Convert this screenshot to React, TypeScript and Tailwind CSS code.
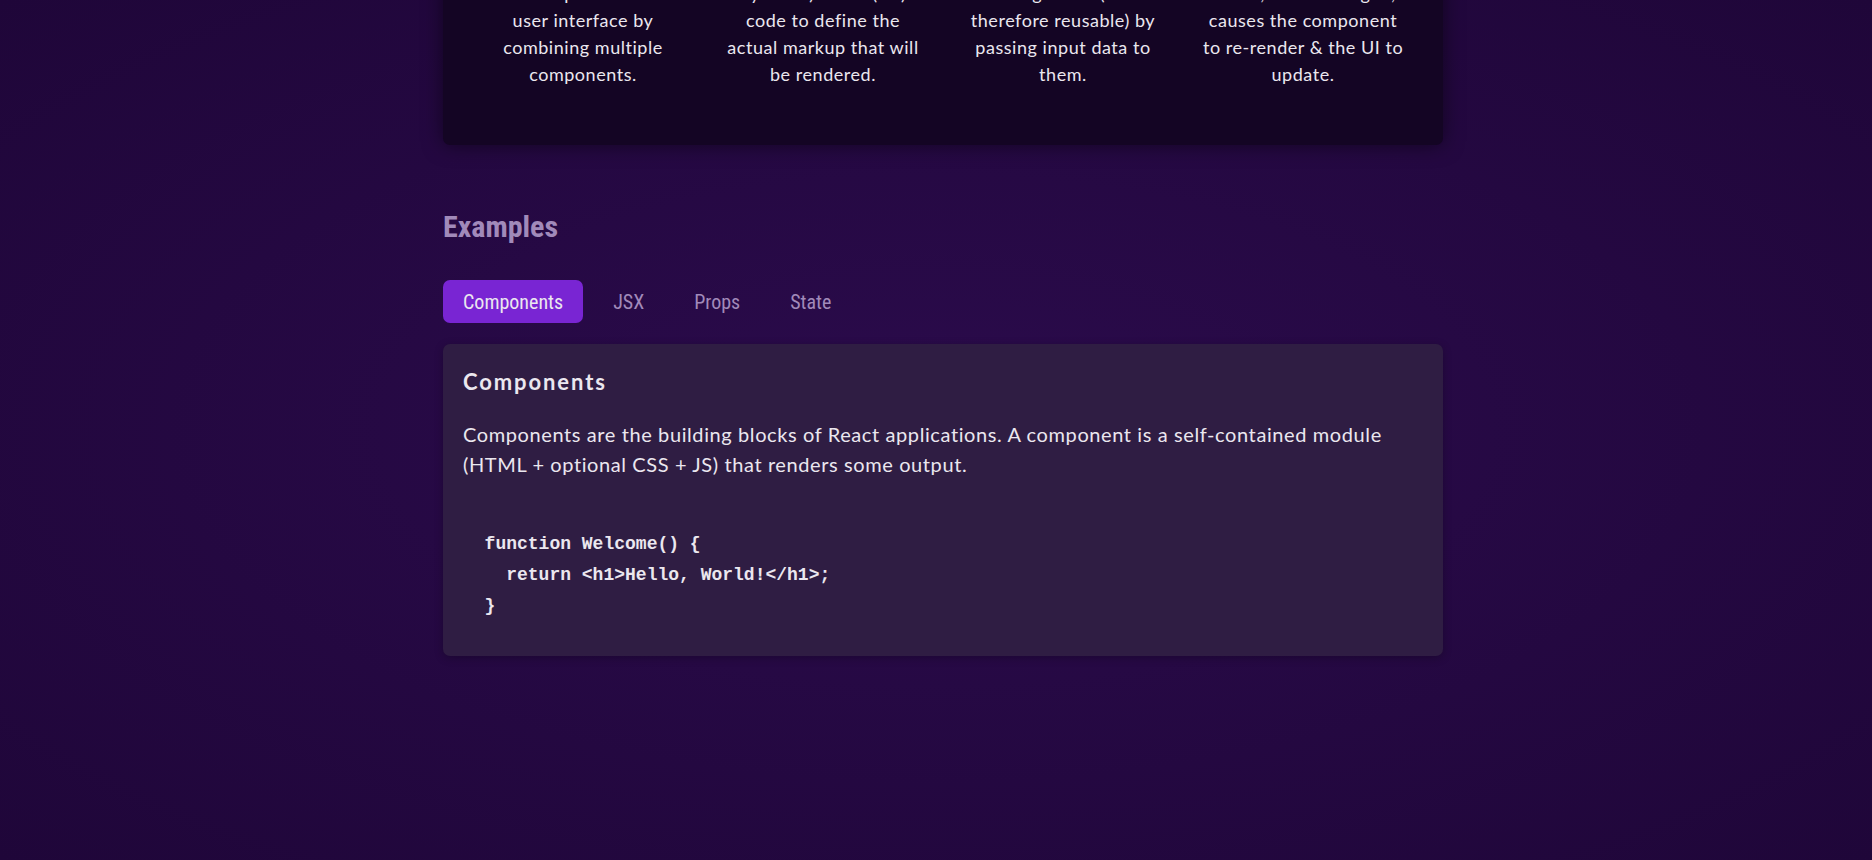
import React, { useState } from "react";

const concepts = [
  {
    title: "Components",
    lines: ["The core UI building block -", "compose the", "user interface by", "combining multiple", "components."],
  },
  {
    title: "JSX",
    lines: ["Return (potentially", "dynamic) HTML(ish)", "code to define the", "actual markup that will", "be rendered."],
  },
  {
    title: "Props",
    lines: ["Make components", "configurable (and", "therefore reusable) by", "passing input data to", "them."],
  },
  {
    title: "State",
    lines: ["React-managed data", "which, when changed,", "causes the component", "to re-render & the UI to", "update."],
  },
];

const examples: Record<string, { title: string; description: string; code: string }> = {
  components: {
    title: "Components",
    description:
      "Components are the building blocks of React applications. A component is a self-contained module (HTML + optional CSS + JS) that renders some output.",
    code: `
function Welcome() {
  return <h1>Hello, World!</h1>;
}`,
  },
  jsx: {
    title: "JSX",
    description:
      "JSX is a syntax extension to JavaScript. It is similar to a template language, but it has full power of JavaScript.",
    code: `
<div>
  <h1>Welcome {userName}</h1>
</div>`,
  },
  props: {
    title: "Props",
    description: "Components accept arbitrary inputs called props. They are like function arguments.",
    code: `
function Welcome(props) {
  return <h1>Hello, {props.name}</h1>;
}`,
  },
  state: {
    title: "State",
    description: "State allows React components to change their output over time in response to user actions.",
    code: `
function Counter() {
  const [count, setCount] = useState(0);
}`,
  },
};

function TabButton({
  label,
  active,
  onSelect,
}: {
  label: string;
  active: boolean;
  onSelect: () => void;
}) {
  return (
    <li>
      <button
        onClick={onSelect}
        className={`h-[43px] rounded-[7px] px-5 font-['Roboto_Condensed','Roboto',sans-serif] font-stretch-condensed text-[20px] leading-none ${
          active ? "bg-[#7925d3] text-[#ebe7ef]" : "text-[#a18aba] hover:bg-[#1b082f]"
        }`}
      >
        {label}
      </button>
    </li>
  );
}

export default function App() {
  const [tab, setTab] = useState("components");
  const ex = examples[tab];

  return (
    <div className="min-h-screen w-full overflow-hidden bg-[radial-gradient(#2b0b4c,#1f0639)] font-['Lato','Noto_Sans',sans-serif] text-[#ebe7ef]">
      <div className="flex justify-center pl-[14px]">
        <main className="w-[1000px]">
          {/* core concepts, page is scrolled so only the bottom shows */}
          <section className="-mt-[20px] rounded-b-[7px] bg-[#140524] pb-[57px] shadow-[0_0_20px_rgba(0,0,0,0.5)]">
            <ul className="flex justify-center gap-10">
              {concepts.map((c) => (
                <li key={c.title} className="w-[200px] text-center text-[18px] leading-[27px] tracking-[0.03em]">
                  {c.lines.slice(1).map((l) => (
                    <span key={l} className="block whitespace-nowrap">
                      {l}
                    </span>
                  ))}
                </li>
              ))}
            </ul>
          </section>

          {/* examples */}
          <section className="mt-[59px]">
            <h2 className="font-['Roboto_Condensed','Roboto',sans-serif] font-stretch-condensed text-[30px] font-bold leading-[45px] text-[#a18aba]">
              Examples
            </h2>
            <menu className="mt-[31px] flex gap-[10px]">
              {Object.keys(examples).map((k) => (
                <TabButton
                  key={k}
                  label={examples[k].title}
                  active={tab === k}
                  onSelect={() => setTab(k)}
                />
              ))}
            </menu>
            <div className="mt-[21px] rounded-[7px] bg-[#2f1d43] p-5 shadow-[0_2px_8px_rgba(0,0,0,0.25)]">
              <h3 className="mt-[1px] text-[22px] font-bold leading-[33px] tracking-[1.9px]">{ex.title}</h3>
              <p className="mt-[21px] text-[20px] leading-[30px] tracking-[0.03em]">{ex.description}</p>
              <pre className="mt-[18px] mb-[15px] font-['DejaVu_Sans_Mono',monospace] text-[18px] font-bold leading-[30px]">
                <code>{"  " + ex.code.replace(/\n/g, "\n  ")}</code>
              </pre>
            </div>
          </section>
        </main>
      </div>
    </div>
  );
}
